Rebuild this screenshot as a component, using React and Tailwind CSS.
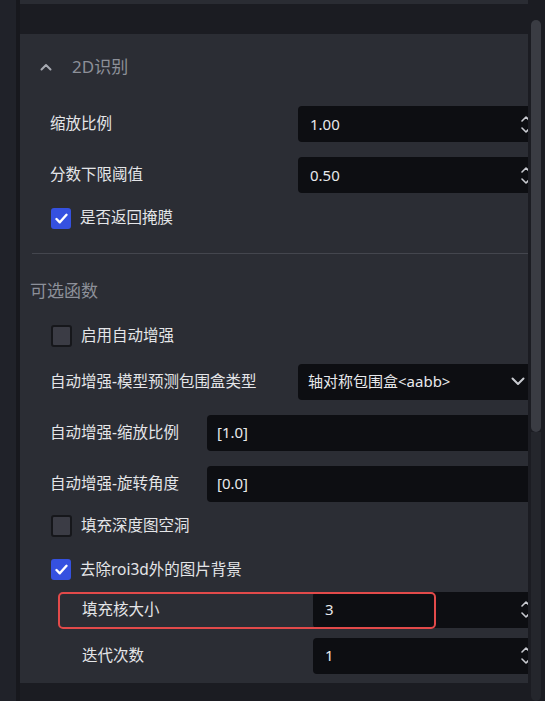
import React from 'react'

const font = { fontFamily: '"Noto Sans", "Noto Sans CJK SC", sans-serif' }

function Spinner() {
  return (
    <div className="flex flex-col items-center gap-[5px] -mr-[3px] text-[#c9cbd1]">
      <svg width="10" height="6" viewBox="0 0 10 6" fill="none">
        <path d="M1 5l4-4 4 4" stroke="currentColor" strokeWidth="1.6" strokeLinecap="round" strokeLinejoin="round" />
      </svg>
      <svg width="10" height="6" viewBox="0 0 10 6" fill="none">
        <path d="M1 1l4 4 4-4" stroke="currentColor" strokeWidth="1.6" strokeLinecap="round" strokeLinejoin="round" />
      </svg>
    </div>
  )
}

function NumberField({ value, className = '' }) {
  return (
    <div className={`h-[36px] bg-[#0d0e12] rounded-l-[4px] flex items-center justify-between pl-[12px] text-[15px] text-[#e8e9ec] ${className}`}>
      <span>{value}</span>
      <Spinner />
    </div>
  )
}

function TextField({ value, className = '' }) {
  return (
    <div className={`h-[36px] bg-[#0d0e12] rounded-l-[4px] flex items-center pl-[10px] text-[15px] text-[#e8e9ec] ${className}`}>
      {value}
    </div>
  )
}

function Check({ checked, label, className = '' }) {
  return (
    <div className={`h-[22px] flex items-center ml-[31px] ${className}`}>
      {checked ? (
        <div className="w-[20px] h-[21px] rounded-[3px] bg-[#3551e0] flex items-center justify-center">
          <svg width="13" height="11" viewBox="0 0 13 11" fill="none">
            <path d="M1.5 6l3.3 3.3L11.5 1.8" stroke="white" strokeWidth="2.4" strokeLinecap="round" strokeLinejoin="round" />
          </svg>
        </div>
      ) : (
        <div className="w-[21px] h-[22px] rounded-[3px] bg-[#3b3c45] border-2 border-[#16171b]" />
      )}
      <span className="ml-[9px] text-[15.5px] text-[#e4e5e8]">{label}</span>
    </div>
  )
}

const label = 'text-[15.5px] text-[#e4e5e8]'

export default function App() {
  return (
    <div className="w-[545px] h-[701px] bg-[#1b1c22] flex overflow-hidden" style={font}>
      {/* left rail */}
      <div className="w-[16px] h-full bg-[#202229]" />
      <div className="w-[4px] h-full bg-[#17181d]" />

      {/* content column */}
      <div className="w-[508px] flex flex-col">
        <div className="h-[4px] bg-[#2a2c33]" />
        <div className="h-[30px]" />

        <div className="h-[649px] bg-[#2b2d34] flex flex-col overflow-hidden">
          {/* header */}
          <div className="h-[66px] flex items-center pl-[20px]">
            <svg width="12" height="8" viewBox="0 0 12 8" fill="none">
              <path d="M1.5 6.5L6 2l4.5 4.5" stroke="#a7aab2" strokeWidth="2" strokeLinecap="round" strokeLinejoin="round" />
            </svg>
            <span className="ml-[20px] text-[17px] text-[#8d9099]">2D识别</span>
          </div>

          <div className="mt-[6px] flex items-center">
            <span className={`w-[278px] pl-[30px] ${label}`}>缩放比例</span>
            <NumberField value="1.00" className="flex-1" />
          </div>
          <div className="mt-[15px] flex items-center">
            <span className={`w-[278px] pl-[30px] ${label}`}>分数下限阈值</span>
            <NumberField value="0.50" className="flex-1" />
          </div>
          <Check checked label="是否返回掩膜" className="mt-[14px]" />

          <div className="mt-[24px] ml-[12px] h-[1px] bg-[#44464e]" />

          <div className="mt-[24px] pl-[10px] text-[17px] text-[#8d9099]">可选函数</div>

          <Check label="启用自动增强" className="mt-[21px]" />

          <div className="mt-[17px] flex items-center">
            <span className={`w-[278px] pl-[30px] ${label}`}>自动增强-模型预测包围盒类型</span>
            <div className="flex-1 h-[36px] bg-[#0d0e12] rounded-l-[4px] flex items-center justify-between pl-[10px] pr-[3px] text-[15px] text-[#e8e9ec]">
              <span>轴对称包围盒&lt;aabb&gt;</span>
              <svg width="14" height="9" viewBox="0 0 14 9" fill="none">
                <path d="M1.5 1.5L7 7l5.5-5.5" stroke="#c9cbd1" strokeWidth="2" strokeLinecap="round" strokeLinejoin="round" />
              </svg>
            </div>
          </div>
          <div className="mt-[15px] flex items-center">
            <span className={`w-[187px] pl-[30px] ${label}`}>自动增强-缩放比例</span>
            <TextField value="[1.0]" className="flex-1" />
          </div>
          <div className="mt-[15px] flex items-center">
            <span className={`w-[187px] pl-[30px] ${label}`}>自动增强-旋转角度</span>
            <TextField value="[0.0]" className="flex-1" />
          </div>

          <Check label="填充深度图空洞" className="mt-[13px]" />
          <Check checked label="去除roi3d外的图片背景" className="mt-[22px]" />

          <div className="relative mt-[11px] flex items-center">
            <span className={`w-[293px] pl-[62px] ${label}`}>填充核大小</span>
            <NumberField value="3" className="flex-1" />
            <div className="absolute left-[38px] top-0 w-[378px] h-[37px] border-2 border-[#e24a4a] rounded-[5px]" />
          </div>
          <div className="mt-[10px] flex items-center">
            <span className={`w-[293px] pl-[62px] ${label}`}>迭代次数</span>
            <NumberField value="1" className="flex-1" />
          </div>
        </div>
      </div>

      {/* scrollbar */}
      <div className="w-[3px]" />
      <div className="w-[10px] pt-[20px] flex flex-col">
        <div className="h-[412px] bg-[#3a3c43] rounded-[5px]" />
        <div className="flex-1 bg-[#24262c] rounded-b-[5px]" />
      </div>
    </div>
  )
}
